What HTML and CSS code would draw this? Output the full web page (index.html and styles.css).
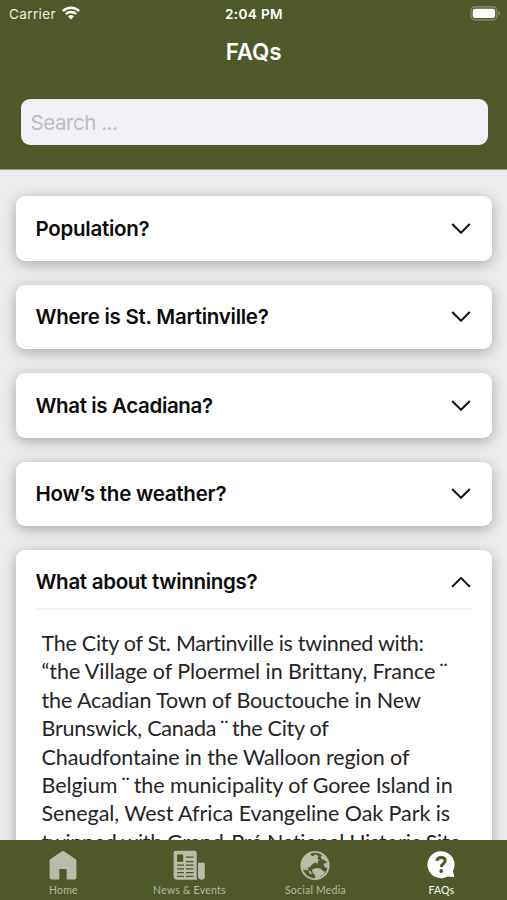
FILE: index.html
```html
<!DOCTYPE html>
<html lang="en">
<head>
<meta charset="utf-8">
<title>FAQs</title>
<link rel="stylesheet" href="styles.css">
</head>
<body>
<div class="app">
  <header class="header">
    <div class="status">
      <div class="carrier"><span>Carrier</span>
        <svg width="18" height="14" viewBox="0 0 18 14"><g fill="none" stroke="#fff" stroke-width="2.4"><path d="M.9 5.1a11.5 11.5 0 0 1 16.2 0M3.8 8.2a7.4 7.4 0 0 1 10.4 0"/></g><path d="M6 10.4a4.3 4.3 0 0 1 6 0L9 13.5z" fill="#fff"/></svg>
      </div>
      <div class="time">2:04 PM</div>
      <svg class="battery" width="31" height="15" viewBox="0 0 31 15"><rect x=".9" y=".9" width="26" height="13" rx="4" fill="none" stroke="#8d9374" stroke-width="1.1"/><rect x="2.7" y="2.7" width="22.4" height="9.4" rx="2" fill="#fff"/><path d="M28.5 5v5c2-1 2-4 0-5z" fill="#8d9374"/></svg>
    </div>
    <h1 class="title">FAQs</h1>
    <div class="search">Search ...</div>
  </header>
  <main class="list">
    <section class="card"><div class="question"><h2 class="q1">Population?</h2><svg class="chevron" viewBox="0 0 20 12"><path d="M1.7 1.5 10 9.8l8.3-8.3"/></svg></div></section>
    <section class="card"><div class="question"><h2 class="q2">Where is St. Martinville?</h2><svg class="chevron" viewBox="0 0 20 12"><path d="M1.7 1.5 10 9.8l8.3-8.3"/></svg></div></section>
    <section class="card"><div class="question"><h2 class="q3">What is Acadiana?</h2><svg class="chevron" viewBox="0 0 20 12"><path d="M1.7 1.5 10 9.8l8.3-8.3"/></svg></div></section>
    <section class="card"><div class="question"><h2 class="q4">How’s the weather?</h2><svg class="chevron" viewBox="0 0 20 12"><path d="M1.7 1.5 10 9.8l8.3-8.3"/></svg></div></section>
    <section class="card open"><div class="question"><h2 class="q5">What about twinnings?</h2><svg class="chevron" viewBox="0 0 20 12"><path d="M1.7 10.2 10 1.9l8.3 8.3"/></svg></div>
      <p class="answer">
        <span class="l1">The City of St. Martinville is twinned with:</span>
        <span class="l2">“the Village of Ploermel in Brittany, France<i> ¨</i></span>
        <span class="l3">the Acadian Town of Bouctouche in New</span>
        <span class="l4">Brunswick, Canada<i> ¨ </i>the City of</span>
        <span class="l5">Chaudfontaine in the Walloon region of</span>
        <span class="l6">Belgium<i> ¨ </i>the municipality of Goree Island in</span>
        <span class="l7">Senegal, West Africa Evangeline Oak Park is</span>
        <span class="l8">twinned with Grand-Pré National Historic Site</span>
      </p>
    </section>
  </main>
  <nav class="tabs">
    <div class="tab"><svg width="32" height="32" viewBox="0 0 32 32"><path fill="currentColor" d="M15 1.2Q16 .6 17 1.2L28.400 9q1 .7 1 2v16.600q0 2-2 2h-7.700V20q0-1-1-1h-5.400q-1 0-1 1v9.600H4.600q-2 0-2-2V11q0-1.300 1-2z"/></svg><span>Home</span></div>
    <div class="tab"><svg width="32" height="32" viewBox="0 0 32 32"><path fill="currentColor" d="M3 .7h18.500q2.200 0 2.200 2.200v24.500q0 1.200.7 2.300H4Q.6 29.700.6 26.300V3Q.6.700 3 .7zM25 12.700h5.500q1.300 0 1.300 1.300v12.500q0 3.200-3.200 3.200T25 26.500z"/><g class="cut"><path d="M4 4.500h6.200v7.300H4z"/><path d="M13 6.500h7.500v1.300H13zm0 4.500h7.500v1.300H13zM4 14.500h7v1.200H4zm9 0h7.500v1.200H13zM4 18.200h7v1.200H4zm9 0h7.500v1.200H13zM4 22h7v1.200H4zm9 0h7.500v1.200H13zM4 25.800h7V27H4zm9 0h7.500V27H13z"/></g></svg><span>News &amp; Events</span></div>
    <div class="tab"><svg width="32" height="32" viewBox="0 0 32 32"><circle cx="16" cy="15.500" r="13.600" fill="none" stroke="currentColor" stroke-width="1.900"/><path fill="currentColor" d="M3 12Q5 5.500 11 3l1 2.200 2.500 1 1.500-2 3.500 1.800-1 2.500 2 2-2 1 .5 2.500-3-1.500-3 2-2 2.500-2.500.5 1 2.500-2 .5L7 19l-1.500 1.500L3 18zM20.500 2.500q6 2 8.500 8.500l-1.500 1-2-2-2.500-.5-1.500-2.500 1.500-1.500zM13 19.500l4-1.500 4.500.5 2.500 2.500 2 .5-1.500 3.500-3 1-1 3-4 .5-.5-4-2.500-3zM24.500 14l4.500-2v6l-3-.5zM9.500 20.500l2.500 1 1 3-2.500-1z"/></svg><span>Social Media</span></div>
    <div class="tab active"><svg width="32" height="32" viewBox="0 0 32 32"><path fill="currentColor" d="M16 1.200A13.500 13.500 0 1 0 22.500 26.500l5.800.5q1.200 0 .9-1.200l-1.300-4.600A13.500 13.500 0 0 0 16 1.200z"/><path class="mark" d="M12 10.800q.3-3.300 4.200-3.300 4 0 4 3.300 0 1.800-2.200 3.200-1.700 1.100-1.700 3"/><circle class="cut" cx="16.200" cy="21" r="1.900"/></svg><span>FAQs</span></div>
  </nav>
</div>
</body>
</html>
```
FILE: styles.css
```css
* { box-sizing: border-box; }
body { margin: 0; font-family: Inter, "Liberation Sans", sans-serif; background: #ececed; }
.app { width: 507px; height: 900px; display: flex; flex-direction: column; overflow: hidden; }
.header { flex: none; height: 170px; background: #4f5828; color: #fff; border-bottom: 1px solid #9a9e87; }
.status { height: 27px; padding: 0 7px 0 9px; display: grid; grid-template-columns: 1fr auto 1fr; align-items: center; font-size: 13.600px; line-height: 17px; }
.status > * { margin-top: 1px; }
.carrier { display: flex; gap: 6px; align-items: center; color: #eceee5; letter-spacing: .35px; }
.carrier svg { margin-top: -2px; }
.time { font-weight: 600; letter-spacing: .35px; margin-right: 1px; }
.status .battery { justify-self: end; margin: 0 -1px 0 0; }
.title { margin: 10px 0 0; font-size: 22.400px; line-height: 30px; font-weight: 600; text-align: center; letter-spacing: -.1px; }
.search { margin: 31.500px 19.500px 0 20.500px; height: 46.500px; border-radius: 9px; background: #f1f0f5; color: #bdbdc2; padding-left: 10px; font-size: 20.500px; line-height: 48px; letter-spacing: -.45px; }
.list { flex: 1; min-height: 0; overflow: hidden; padding: 26.400px 15px 0 15.500px; display: flex; flex-direction: column; gap: 24px; }
.card { flex: none; height: 64.400px; background: #fff; border-radius: 9px; padding: 0 20px; box-shadow: 0 3px 14px rgba(0,0,0,.29); }
.card.open { height: 360px; }
.question { height: 64px; padding-top: 1px; display: flex; align-items: center; justify-content: space-between; }
.question h2 { margin: 0; font-size: 20.500px; line-height: 28px; font-weight: 600; color: #0b0b0c; white-space: nowrap; letter-spacing: -.26px; }
.question .q3 { letter-spacing: -.36px; }
.question .q4 { letter-spacing: -.23px; }
.question .q5 { letter-spacing: -.29px; }
.open .question { height: 60.500px; padding-top: 6px; border-bottom: 2px solid #f3f3f3; }
.chevron { width: 20px; height: 12px; fill: none; stroke: #111; stroke-width: 2; stroke-linecap: round; stroke-linejoin: round; margin-right: 1px; }
.answer { margin: 0; padding: 18.500px 0 0 6px; font-family: Lato, sans-serif; font-size: 21.500px; line-height: 28.400px; color: #252526; font-variant-ligatures: none; }
.answer span { display: block; white-space: nowrap; }
.answer i { font-style: normal; word-spacing: -1.500px; }
.l1 { letter-spacing: -.27px; }
.l2 { letter-spacing: -.06px; }
.l3 { letter-spacing: -.1px; }
.l4 { letter-spacing: -.25px; }
.l5 { letter-spacing: -.1px; }
.l6 { letter-spacing: -.06px; }
.l7 { letter-spacing: -.07px; }
.l8 { letter-spacing: -.3px; }
.tabs { flex: none; height: 60px; background: #4f5828; display: grid; grid-template-columns: repeat(4, 126px); padding-left: .4px; }
.tab { display: flex; flex-direction: column; align-items: center; padding-top: 10px; color: #b9bcab; font-family: Lato, sans-serif; font-size: 10.500px; line-height: 14px; letter-spacing: .22px; }
.tab span { margin-top: 1px; }
.active { color: #fff; }
.cut { fill: #4f5828; }
.mark { fill: none; stroke: #4f5828; stroke-width: 3; }
```
